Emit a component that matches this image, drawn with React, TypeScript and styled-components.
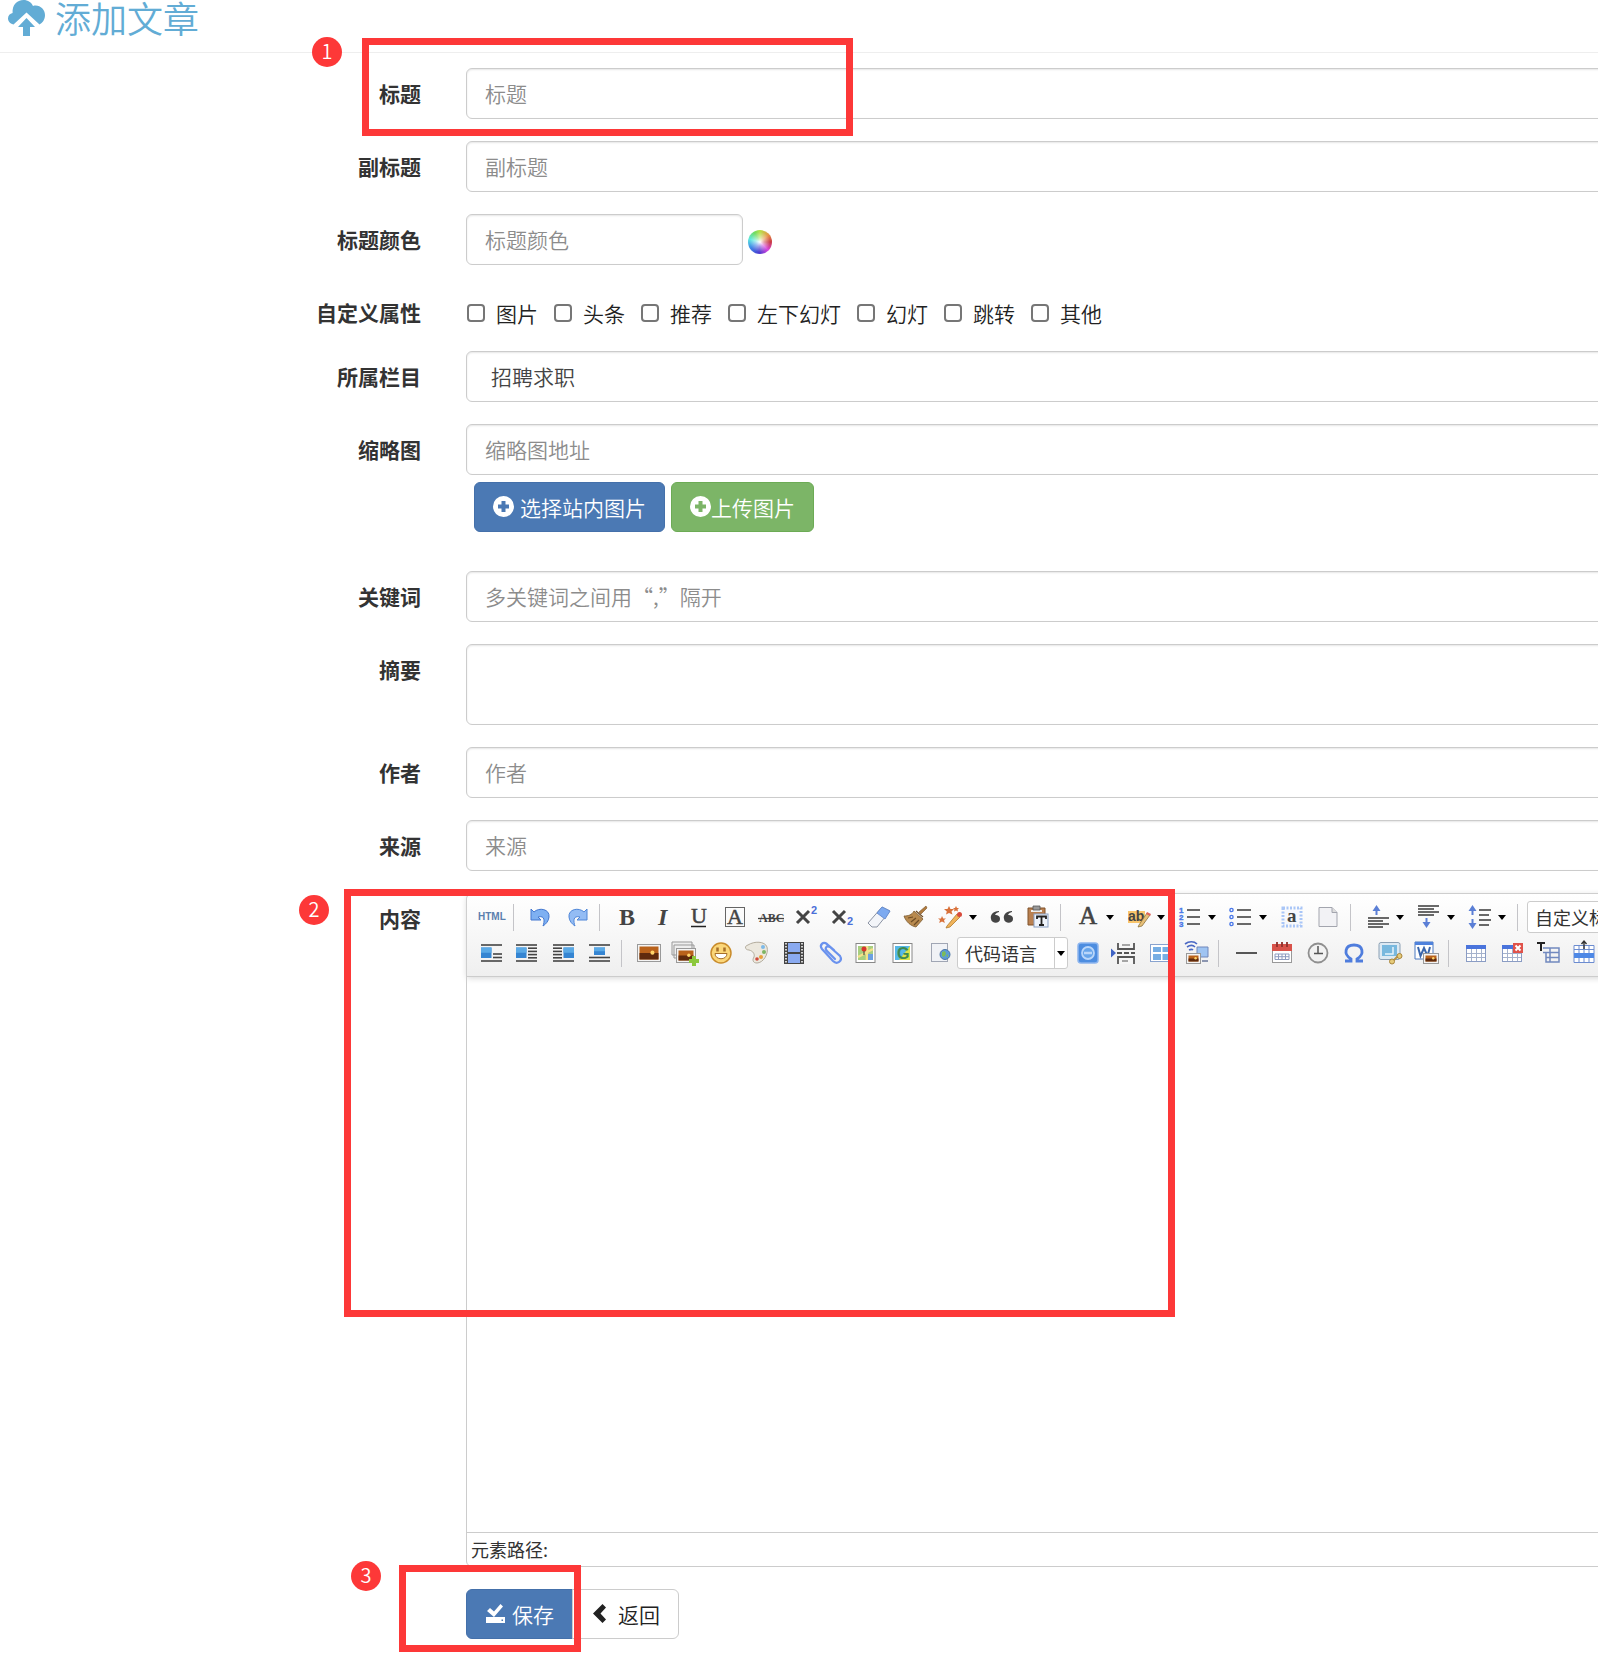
import React from "react";
import styled, { createGlobalStyle } from "styled-components";

const Global = createGlobalStyle`
  *, *::before { box-sizing: border-box; }
  body {
    margin: 0;
    background: #fff;
    color: #333;
    font-family: "Noto Sans CJK SC", "Noto Sans", sans-serif;
    font-size: 21px;
    line-height: 30px;
  }
  button, input, select, textarea { font: inherit; color: inherit; }
`;

const RED = "#fd3838";

const Page = styled.main`
  position: relative;
  overflow-x: clip;
  padding-bottom: 24px;
`;

const Header = styled.header`
  display: flex;
  align-items: flex-start;
  gap: 10px;
  padding: 0 8px 16px;
  border-bottom: 1px solid #eee;
  margin-bottom: 15px;
  color: #62acd5;
`;

const Title = styled.h1`
  margin: 0;
  font-size: 36px;
  line-height: 34px;
  font-weight: 350;
`;

/* The form is wider than the window, so fields run past its right edge. */
const Form = styled.form`
  width: calc(100% + 45px);
  display: flex;
  flex-direction: column;
  gap: 22px;
  font-weight: 350;
`;

const Row = styled.div`
  display: grid;
  grid-template-columns: 421px minmax(0, 1fr);
  column-gap: 45px;
  align-items: start;
`;

const Caption = styled.label`
  padding-top: 10px;
  text-align: right;
  font-weight: 700;
`;

const Input = styled.input<{ $short?: boolean }>`
  display: block;
  width: ${(p) => (p.$short ? "277px" : "100%")};
  height: 51px;
  padding: 0 18px 2px;
  border: 1px solid #ccc;
  border-radius: 6px;
  background: #fff;
  box-shadow: inset 0 1px 2px rgba(0, 0, 0, 0.1);
  outline: none;
  &::placeholder { color: #8c8c8c; opacity: 1; }
`;

const Area = styled.textarea`
  display: block;
  width: 100%;
  height: 81px;
  padding: 9px 18px;
  border: 1px solid #ccc;
  border-radius: 6px;
  box-shadow: inset 0 1px 2px rgba(0, 0, 0, 0.1);
  resize: none;
`;

const Select = styled.select`
  display: block;
  width: 100%;
  height: 51px;
  padding: 0 24px 2px;
  border: 1px solid #ccc;
  border-radius: 6px;
  background: #fff;
  box-shadow: inset 0 1px 2px rgba(0, 0, 0, 0.1);
  color: #444;
  appearance: none;
`;

const Inline = styled.div`
  display: flex;
  align-items: center;
  gap: 5px;
`;

const Wheel = styled.button`
  width: 24px;
  height: 24px;
  margin-top: 4px;
  padding: 0;
  border: 0;
  border-radius: 50%;
  background:
    radial-gradient(circle, #fff 0, rgba(255, 255, 255, 0.5) 25%, rgba(255, 255, 255, 0) 60%),
    conic-gradient(#b5e048, #e8954a 50deg, #c93a45 90deg, #d848dd 135deg, #4a3ad0 185deg, #3f8be8 240deg, #5fe8e0 285deg, #70dc60 330deg, #b5e048);
`;

const Checks = styled.div`
  display: flex;
  gap: 16px;
  padding: 11px 0 1px 1px;
  color: #222;
`;

const Check = styled.label`
  display: flex;
  align-items: center;
  gap: 11px;
`;

const Box = styled.input`
  appearance: none;
  width: 18px;
  height: 18px;
  margin: 0;
  border: 2px solid #767676;
  border-radius: 4px;
  background: #fff;
`;

const Uploads = styled.div`
  display: flex;
  gap: 6px;
  padding: 7px 8px 17px;
`;

const Button = styled.button<{ $kind: "primary" | "success" | "plain"; $tight?: boolean }>`
  display: flex;
  align-items: center;
  gap: ${(p) => (p.$tight ? "0" : "6px")};
  height: 50px;
  padding: 0 18px 1px;
  border-radius: 6px;
  font-weight: 350;
  border: 1px solid ${(p) => ({ primary: "#4470aa", success: "#6cab55", plain: "#ccc" })[p.$kind]};
  background: ${(p) => ({ primary: "#4b79b4", success: "#7cb567", plain: "#fff" })[p.$kind]};
  color: ${(p) => (p.$kind === "plain" ? "#222" : "#fff")};
`;

const Actions = styled.div`
  display: flex;
  ${Button}:first-child { border-radius: 6px 0 0 6px; }
  ${Button}:last-child { border-radius: 0 6px 6px 0; margin-left: -1px; }
`;

const Editor = styled.div`
  border: 1px solid #ccc;
  border-radius: 6px;
  font-size: 18px;
`;

const Toolbar = styled.div`
  position: relative;
  padding: 5px 6px;
  border-bottom: 1px solid #ccc;
  border-radius: 6px 6px 0 0;
  background: linear-gradient(#fff, #efefef);
  box-shadow: 0 1px 6px #d4d4d4;
`;

const Tools = styled.div`
  display: flex;
  align-items: center;
  height: 36px;
`;

const Tool = styled.button`
  flex: none;
  display: grid;
  place-items: center;
  width: 36px;
  height: 30px;
  padding: 0;
  border: 0;
  background: none;
`;

const Caret = styled.button`
  flex: none;
  width: 15px;
  height: 30px;
  padding: 0;
  border: 0;
  background: none;
  &::before {
    content: "";
    display: block;
    width: 8px;
    border: 4px solid transparent;
    border-top: 5px solid #000;
    border-bottom: 0;
  }
`;

const Divider = styled.span`
  flex: none;
  width: 1px;
  height: 27px;
  margin: 0 9px 0 4px;
  background: #c4c4c8;
`;

const Combo = styled.span<{ $wide?: boolean }>`
  flex: none;
  display: flex;
  width: ${(p) => (p.$wide ? "140px" : "111px")};
  height: 32px;
  margin: ${(p) => (p.$wide ? "0" : "0 2px")};
  border: 1px solid #ccc;
  border-radius: 3px;
  background: #fff;
`;

const ComboSelect = styled.select`
  flex: 1;
  min-width: 0;
  padding: 0 0 0 7px;
  border: 0;
  border-right: 1px solid #ccc;
  background: none;
  font-weight: 400;
  appearance: none;
`;

const ComboArrow = styled.span`
  align-self: center;
  width: 8px;
  margin: 0 2px;
  border: 4px solid transparent;
  border-top: 5px solid #000;
  border-bottom: 0;
`;

const Canvas = styled.div`
  height: 555px;
  outline: none;
`;

const Status = styled.div`
  height: 34px;
  padding: 1px 4px;
  border-top: 1px solid #ccc;
  font-weight: 400;
`;

/* Call-outs lie over the form. */
const Frame = styled.div<{ $x: number; $y: number; $w: number; $h: number }>`
  position: absolute;
  left: ${(p) => p.$x}px;
  top: ${(p) => p.$y}px;
  width: ${(p) => p.$w}px;
  height: ${(p) => p.$h}px;
  border: 7px solid ${RED};
  pointer-events: none;
`;

const Badge = styled.span<{ $x: number; $y: number }>`
  position: absolute;
  left: ${(p) => p.$x}px;
  top: ${(p) => p.$y}px;
  width: 30px;
  height: 30px;
  border-radius: 50%;
  background: ${RED};
  color: #fff;
  font-size: 20px;
  line-height: 27px;
  font-weight: 350;
  text-align: center;
`;

const CloudUp = () => (
  <svg width="37" height="36" viewBox="0 0 37 36" fill="currentColor" aria-hidden="true">
    <path d="M5.5 24.5C1.5 23.5 0 20.5 0 18.5c0-3 2-5 4.6-5.5C4 5 9 0 15.5 0 20 0 23.5 2.5 25 6c6-2 12 3 12 9 0 4.5-2.5 8-5.5 9.5L18.5 12.5z" />
    <path d="M18.5 18l8.500 9h-5v9h-7v-9h-5z" />
  </svg>
);

const Plus = () => (
  <svg width="21" height="21" viewBox="0 0 21 21" aria-hidden="true">
    <path fill="currentColor" fillRule="evenodd" d="M10.5 0a10.5 10.5 0 1 0 0 21 10.5 10.5 0 0 0 0-21zM8.500 5h4v3.500H16v4h-3.500V16h-4v-3.500H5v-4h3.500z" />
  </svg>
);

const Saved = () => (
  <svg width="21" height="21" viewBox="0 0 21 21" fill="currentColor" aria-hidden="true">
    <path d="M2 8l3-3 4 3.500L15.500 1 18 3.500 9 14zM1 14h19v6H1z" />
    <path fill="#4b79b4" d="M16.500 16.500h1.500V18h-1.500z" />
  </svg>
);

const Back = () => (
  <svg width="21" height="21" viewBox="0 0 21 21" fill="currentColor" aria-hidden="true">
    <path d="M11.500 1L15 4.500 9.500 10.500 15 16.500 11.500 20 2 10.500z" />
  </svg>
);

const G = "#444";
const serif = "Liberation Serif, serif";
const sans = "Liberation Sans, sans-serif";

const lines = (pts: [number, number, number][], w = 1.6) =>
  pts.map(([x1, x2, y], i) => <path key={i} d={`M${x1} ${y}H${x2}`} stroke={G} strokeWidth={w} />);

const blue = (x: number, y: number, w: number, h: number) => (
  <>
    <rect x={x} y={y} width={w} height={h} fill="#3585d2" />
    <rect x={x} y={y} width={w} height={h / 2} fill="#5aa9e6" />
  </>
);

const photo = (x: number, y: number, w: number, h: number) => (
  <>
    <rect x={x} y={y} width={w} height={h} fill="#f4f4f4" stroke="#999" />
    <rect x={x + 2} y={y + 2} width={w - 4} height={h - 4} fill="#b9621b" />
    <path d={`M${x + 2} ${y + h / 2}h${w - 4}v${h / 2 - 2}h${4 - w}z`} fill="#5f2a0d" />
    <circle cx={x + w * 0.65} cy={y + h * 0.48} r={h * 0.12} fill="#ffd46a" />
  </>
);

const grid = (
  <>
    <rect x="2.500" y="4.500" width="19" height="16" fill="#fff" stroke="#8a9cc4" />
    <path d="M2 4h20v4H2z" fill="#4a74dc" />
    <path d="M7.500 8v12M12.500 8v12M17.500 8v12M3 12.500h18M3 16.500h18" stroke="#a5b2cc" />
  </>
);

const icons: Record<string, React.ReactNode> = {
  html: <text x="-1" y="15" fontFamily={sans} fontSize="10" fontWeight="700" fill="#5b7fae">HTML</text>,
  undo: <path d="M2 4l3 3c5-5 16-3 15 5-.3 4-3 7-6 9 1.500-4 2.500-11-5-9l3 3H2z" fill="#7eb0f2" stroke="#4377cf" />,
  redo: <path d="M22 4l-3 3C14 2 3 4 4 12c.3 4 3 7 6 9-1.500-4-2.500-11 5-9l-3 3h10z" fill="#93bcf4" stroke="#4f86d8" />,
  bold: <text x="4" y="20" fontFamily={serif} fontSize="24" fontWeight="700" fill={G}>B</text>,
  italic: <text x="7" y="20" fontFamily={serif} fontSize="24" fontWeight="700" fontStyle="italic" fill={G}>I</text>,
  underline: (
    <>
      <text x="4" y="18" fontFamily={serif} fontSize="22" fill={G} stroke={G} strokeWidth=".5">U</text>
      <path d="M4 21.500h15" stroke="#222" strokeWidth="1.500" />
    </>
  ),
  box: (
    <>
      <rect x="2.500" y="2.500" width="19" height="19" fill="none" stroke="#666" />
      <text x="4" y="19" fontFamily={serif} fontSize="22" fill={G} stroke={G} strokeWidth=".5">A</text>
    </>
  ),
  strike: (
    <>
      <text x="0" y="17" fontFamily={serif} fontSize="12" fontWeight="700" fill={G}>ABC</text>
      <path d="M-1 13.500h26" stroke={G} strokeWidth="1.300" />
    </>
  ),
  sup: (
    <>
      <path d="M2 6l12 12M14 6L2 18" stroke={G} strokeWidth="3" />
      <text x="16" y="9" fontSize="11" fontWeight="700" fontFamily={sans} fill="#4a6fd8">2</text>
    </>
  ),
  sub: (
    <>
      <path d="M2 6l12 12M14 6L2 18" stroke={G} strokeWidth="3" />
      <text x="16" y="20" fontSize="11" fontWeight="700" fontFamily={sans} fill="#4a6fd8">2</text>
    </>
  ),
  eraser: (
    <>
      <path d="M1 18L15 2l8 4L10 22H5z" fill="#f3f5f9" stroke="#8b93a3" />
      <path d="M10 8l5-6 8 4-5 8z" fill="#7daaf0" stroke="#6a8fd0" />
    </>
  ),
  brush: (
    <>
      <path d="M23 1l-7 6 2 2 6-6z" fill="#b07a3c" stroke="#7b5326" strokeWidth=".6" />
      <path d="M11 6l9 8-7 8C8 21 3 17 1 11c4 0 8-1 10-5z" fill="#b88a4f" stroke="#7b5a30" strokeWidth=".8" />
      <path d="M5 13l5-1M8 17l5-4M11 20l5-5M13 6l7 6" stroke="#6d4c25" strokeWidth="1.200" />
    </>
  ),
  magic: (
    <>
      <path d="M8 21l10-12 3 3-10 10-4 1z" fill="#f0b35a" stroke="#b07a2c" strokeWidth=".8" />
      <circle cx="20.500" cy="9.500" r="2.500" fill="#d84b3c" />
      <path d="M10 1l1.500 3H15l-2.500 2.500 1 3L10 8 7 9.500l.8-3L5 4h3.500zM3 11l1.200 2.500H7L5 15l.8 3L3 16.500.2 18 1 15l-2-1.500h3zM17 1l1 2h2l-1.500 1.500.5 2-2-1-2 1 .5-2L14 3h2z" fill="#d9713a" />
    </>
  ),
  quote: <path d="M9 6C3 6 0 10 1 14c.6 5 9 5 9 0 0-3-2-4-5-4 1-2 2-2.500 4-3zM22 6c-6 0-9 4-8 8 .6 5 9 5 9 0 0-3-2-4-5-4 1-2 2-2.500 4-3z" fill={G} />,
  paste: (
    <>
      <path d="M2 3h17v17H2z" fill="#b98051" stroke="#80532b" />
      <path d="M5 5h11v2H5z" fill="#eee" />
      <path d="M7 1h7v4H7z" fill="#999" stroke="#555" strokeWidth=".8" />
      <rect x="8" y="9" width="14" height="13" fill="#eef3fb" stroke="#8aa0c4" />
      <path d="M11 14v-2.500h9V14M15.500 12v8M13 20h5" stroke="#222" strokeWidth="1.800" fill="none" />
    </>
  ),
  color: <text x="3" y="19" fontFamily={serif} fontSize="25" fill={G} stroke={G} strokeWidth=".6">A</text>,
  mark: (
    <>
      <path d="M1 6h17v12H1z" fill="#f8c56c" />
      <text x="1" y="16" fontFamily={sans} fontSize="14" fontWeight="700" fill={G}>ab</text>
      <path d="M12 20l8-12 3 2-8 11-4 1z" fill="#e8c078" stroke="#8c7440" strokeWidth=".8" />
      <path d="M20 7l4 2-1 2-4-2z" fill="#e0655c" />
    </>
  ),
  ol: (
    <>
      {lines([[9, 22, 5], [9, 22, 12], [9, 22, 19]])}
      {["1", "2", "3"].map((n, i) => (
        <text key={n} x="1" y={8 + i * 7} fontSize="8" fontWeight="700" fontFamily={sans} fill="#4a78e8" stroke="#4a78e8" strokeWidth=".4">{n}</text>
      ))}
    </>
  ),
  ul: (
    <>
      {lines([[8, 22, 5], [8, 22, 12], [8, 22, 19]])}
      {[5, 12, 19].map((y) => <circle key={y} cx="2.500" cy={y} r="1.600" fill="none" stroke="#4a78e8" strokeWidth="1.400" />)}
    </>
  ),
  anchor: (
    <>
      <rect x="3" y="3" width="18" height="18" fill="none" stroke="#a9c6f7" strokeWidth="3" strokeDasharray="2 1.500" />
      <rect x="5" y="5" width="14" height="14" fill="#f6f8fc" />
      <text x="7" y="17" fontFamily={serif} fontSize="19" fontWeight="700" fill={G}>a</text>
    </>
  ),
  page: (
    <>
      <path d="M3 2.500h13l5 5v14H3z" fill="#f2f2f5" stroke="#a3a5ae" />
      <path d="M16 2.500v5h5" fill="#ddd" stroke="#a3a5ae" />
    </>
  ),
  above: (
    <>
      {lines([[2, 23, 13], [2, 17, 16], [2, 23, 19], [2, 17, 22]])}
      <path d="M10.500 0l4 6h-3v4h-2V6h-3z" fill="#5b7fd6" />
    </>
  ),
  below: (
    <>
      {lines([[1, 22, 1], [1, 17, 4], [1, 22, 7], [1, 17, 10]])}
      <path d="M9.500 23l4-6h-3v-4h-2v4h-3z" fill="#5b7fd6" />
    </>
  ),
  leading: (
    <>
      {lines([[11, 23, 5], [11, 21, 10], [11, 23, 15], [11, 21, 20]])}
      <path d="M4.500 0l4 6h-3v4h-2V6h-3zM4.500 24l4-6h-3v-4h-2v4h-3z" fill="#5b7fd6" />
    </>
  ),
  left: (
    <>
      {lines([[2, 23, 4], [14, 23, 13], [14, 23, 16.5], [2, 23, 20]])}
      {blue(2, 6.5, 10.5, 10.5)}
    </>
  ),
  wrapLeft: (
    <>
      {lines([[1, 22, 4], [13, 22, 7.2], [13, 22, 10.4], [13, 22, 13.6], [13, 22, 16.8], [1, 22, 20]])}
      {blue(1, 6.5, 10.5, 10.5)}
    </>
  ),
  wrapRight: (
    <>
      {lines([[2, 23, 4], [2, 11, 7.2], [2, 11, 10.4], [2, 11, 13.6], [2, 11, 16.8], [2, 23, 20]])}
      {blue(12.5, 6.5, 10.5, 10.5)}
    </>
  ),
  middle: (
    <>
      {lines([[2, 23, 4], [2, 23, 16.5], [2, 23, 20]])}
      {blue(7, 6.5, 11, 7.5)}
    </>
  ),
  image: photo(0.5, 3.5, 23, 17),
  images: (
    <>
      <path d="M-1 1h20v13H-1zM1 4h20v13H1z" fill="#eee" stroke="#999" />
      {photo(3.5, 7.5, 19, 14)}
      <path d="M19 15h4v3h3v4h-3v3h-4v-3h-3v-4h3z" fill="#8cc83c" />
    </>
  ),
  smile: (
    <>
      <circle cx="12" cy="12" r="10" fill="#fbd679" stroke="#c98c2c" strokeWidth="1.500" />
      <path d="M6 12.500h12c0 7-12 7-12 0z" fill="#fff" stroke="#a8702a" />
      <path d="M8.500 6.500v4M15.500 6.500v4" stroke="#a8702a" strokeWidth="2.500" />
    </>
  ),
  palette: (
    <>
      <path d="M4 9C0 9-1 5 3 4c6-4 17-4 19 2 2 7-4 16-10 16-4 0-5-3-3-6 1-3-1-6-5-7z" fill="#ece8de" stroke="#b3ac9d" />
      <circle cx="18" cy="6" r="2" fill="#7db9e8" />
      <circle cx="19" cy="11" r="2" fill="#7fb562" />
      <circle cx="16" cy="16" r="2" fill="#e8a13c" />
      <circle cx="12" cy="18" r="1.800" fill="#cf4a3c" />
    </>
  ),
  film: (
    <>
      <path d="M3 1h20v22H3z" fill="#444" />
      <path d="M7 2h12v9H7zM7 13h12v9H7z" fill="#8aaaf0" />
      <path d="M5 2v21M21 2v21" stroke="#e5e5e5" strokeWidth="1.800" strokeDasharray="1.500 1.500" />
    </>
  ),
  clip: <path d="M17 9L10 3C6 0 2 4 5 8l11 12c4 4 10 0 7-5L13 6C10 4 7 7 10 10l8 8" fill="none" stroke="#6a92ee" strokeWidth="2.200" strokeLinecap="round" />,
  map: (
    <>
      <rect x="3" y="2.500" width="19" height="19" fill="#fff" stroke="#888" />
      <path d="M5 5h15v14H5z" fill="#a8cf80" />
      <path d="M5 16l15-8M14 5v14" stroke="#f5e08a" strokeWidth="2.500" />
      <path d="M15 13h5v6h-5z" fill="#6ca0e0" />
      <path d="M11 14V9" stroke="#333" />
      <circle cx="11" cy="8" r="2.500" fill="#d8342c" />
    </>
  ),
  gmap: (
    <>
      <rect x="4" y="2.500" width="19" height="19" fill="#fff" stroke="#888" />
      <path d="M6 5h15v14H6z" fill="#56b8e8" />
      <path d="M21 5v14H10z" fill="#dbe24a" />
      <text x="8" y="18" fontFamily={sans} fontSize="16" fontWeight="700" fill="#3f8a50">G</text>
    </>
  ),
  frame: (
    <>
      <rect x="6.500" y="2.500" width="16" height="18" fill="#f0f2f6" stroke="#a0a6b4" />
      <circle cx="20" cy="13.500" r="5" fill="#5b9bd8" stroke="#4a75a5" />
      <path d="M17 11l3-1 1 3-2 3-2-1zM21 15l2-2v3z" fill="#7cbb5a" />
    </>
  ),
  app: (
    <>
      <rect x="2" y="2" width="20" height="20" rx="3" fill="#4d8de0" stroke="#8db5ee" strokeWidth="1.500" />
      <circle cx="12" cy="12" r="6" fill="#68a5ea" stroke="#b9d6fa" strokeWidth="1.800" />
      <path d="M8 12h8" stroke="#b9d6fa" strokeWidth="2.500" />
    </>
  ),
  pageBreak: (
    <>
      <path d="M-1 7.500l5 4.500-5 4.500z" fill="#3f63c4" />
      <path d="M6 2v6h16V2M6 23v-7h16v7" fill="#f6f6f6" stroke="#555" strokeWidth="1.800" />
      <path d="M5 12h18" stroke="#555" strokeWidth="1.800" strokeDasharray="5 2" />
      <path d="M10 4h8M10 20h6" stroke="#555" />
    </>
  ),
  template: (
    <>
      <rect x="2.500" y="3.500" width="22" height="17" fill="#fff" stroke="#88a3cf" />
      <path d="M5 6h8v5H5zM14.500 6h8v5h-8zM5 13h8v6H5zM14.500 13h8v6h-8z" fill="#76aee4" />
    </>
  ),
  background: (
    <>
      <path d="M1 3c4-3 9-3 12 0M3 6c3-2 6-2 8 0M5 9c2-1 3-1 4 0" fill="none" stroke="#4a68c4" strokeWidth="1.600" />
      <path d="M13 6h11v10H13z" fill="#9fc4f2" stroke="#7187bb" />
      {photo(2.5, 12.5, 14, 10)}
      <path d="M18 19h6v2h-6z" fill="#8b95b0" />
    </>
  ),
  hr: lines([[2, 23, 12]], 1.8),
  date: (
    <>
      <rect x="2.500" y="3.500" width="19" height="18" fill="#fff" stroke="#999" />
      <path d="M2 3h20v7H2z" fill="#d8524a" />
      <path d="M7 1v5M12 1v5M17 1v5" stroke="#8f2f2a" strokeWidth="1.800" />
      <path d="M5 13h14v5.500H5zM8.500 13v5.500M12 13v5.500M15.500 13v5.500M5 15.700h14" fill="none" stroke="#8e9cc0" />
    </>
  ),
  time: (
    <>
      <circle cx="12" cy="12" r="9.500" fill="#f2f2f2" stroke="#8f8f8f" strokeWidth="1.800" />
      <path d="M12 5v8M8 12.500h9" stroke="#555" strokeWidth="1.500" />
    </>
  ),
  omega: <path d="M3 20h6v-2C1 13 3 4 12 4s11 9 3 14v2h6" fill="none" stroke="#4f7ddd" strokeWidth="2.800" />,
  snapshot: (
    <>
      <rect x="1" y="1.500" width="21" height="17" rx="2" fill="#dce9f3" stroke="#8ba0b4" />
      <path d="M4 4h15v11H4z" fill="#78b8de" />
      <path d="M15 6v7H7" fill="none" stroke="#e6f4fc" strokeWidth="1.500" />
      <path d="M14 21l6-6" stroke="#b89346" strokeWidth="2" />
      <circle cx="14" cy="20.500" r="2.500" fill="#e6cb7a" stroke="#a8853c" />
      <circle cx="21.500" cy="15" r="2.500" fill="#e6cb7a" stroke="#a8853c" />
    </>
  ),
  word: (
    <>
      <path d="M1 1h18v17H1z" fill="#fff" stroke="#4a78c0" />
      <path d="M1 1h18v3H1z" fill="#4f82dc" />
      <path d="M4 6l2.500 9L10 7l3.500 8L16 6" fill="none" stroke="#3a66ac" strokeWidth="2" />
      {photo(9.5, 12.5, 15, 10)}
    </>
  ),
  table: grid,
  tableDelete: (
    <>
      {grid}
      <path d="M13 2h10v10H13z" fill="#e0524a" />
      <path d="M15.500 4.500l5 5M20.500 4.500l-5 5" stroke="#fff" strokeWidth="2" />
    </>
  ),
  tableTitle: (
    <>
      <path d="M1 2h8M5 2v8" stroke="#222" strokeWidth="2" />
      <path d="M7 7h16v14H10v-9M7 11.500h16M10 16.500h13M14 7v14" fill="none" stroke="#7189bf" strokeWidth="1.500" />
    </>
  ),
  rowInsert: (
    <>
      <path d="M2 4.500h20v17H2zM2 8.500h20M7 4v17M12 4v17M17 4v17" fill="#fff" stroke="#6c8cd0" />
      <path d="M2 12h20v5H2z" fill="#4e88e6" />
      <path d="M12 8V0M9.500 3L12 0l2.500 3" fill="none" stroke="#333" strokeWidth="1.400" />
    </>
  ),
};

type Item = { icon: string; label: string; caret?: boolean } | { combo: string; wide?: boolean } | "|";
const t = (icon: string, label: string, caret = false): Item => ({ icon, label, caret });

const rowOne: Item[] = [
  t("html", "源代码"), "|", t("undo", "撤销"), t("redo", "重做"), "|",
  t("bold", "加粗"), t("italic", "斜体"), t("underline", "下划线"), t("box", "字符边框"), t("strike", "删除线"),
  t("sup", "上标"), t("sub", "下标"), t("eraser", "清除格式"), t("brush", "格式刷"), t("magic", "自动排版", true),
  t("quote", "引用"), t("paste", "纯文本粘贴"), "|", t("color", "字体颜色", true), t("mark", "背景色", true),
  t("ol", "有序列表", true), t("ul", "无序列表", true), t("anchor", "全选"), t("page", "清空文档"), "|",
  t("above", "段前距", true), t("below", "段后距", true), t("leading", "行间距", true), "|",
  { combo: "自定义标题", wide: true },
];

const rowTwo: Item[] = [
  t("left", "左浮动"), t("wrapLeft", "左环绕"), t("wrapRight", "右环绕"), t("middle", "居中"), "|",
  t("image", "单图上传"), t("images", "多图上传"), t("smile", "表情"), t("palette", "涂鸦"), t("film", "视频"),
  t("clip", "附件"), t("map", "百度地图"), t("gmap", "谷歌地图"), t("frame", "插入框架"),
  { combo: "代码语言" }, t("app", "百度应用"), t("pageBreak", "分页"), t("template", "模板"), t("background", "背景"), "|",
  t("hr", "分隔线"), t("date", "日期"), t("time", "时间"), t("omega", "特殊字符"), t("snapshot", "截图"), t("word", "图片转存"), "|",
  t("table", "插入表格"), t("tableDelete", "删除表格"), t("tableTitle", "表格标题"), t("rowInsert", "前插入行"),
];

const ToolRow = ({ items }: { items: Item[] }) => (
  <Tools>
    {items.map((it, i) => {
      if (it === "|") return <Divider key={i} />;
      if ("combo" in it)
        return (
          <Combo key={i} $wide={it.wide}>
            <ComboSelect aria-label={it.combo}><option>{it.combo}</option></ComboSelect>
            <ComboArrow />
          </Combo>
        );
      return (
        <React.Fragment key={i}>
          <Tool type="button" aria-label={it.label}>
            <svg width="24" height="24" viewBox="0 0 24 24" fill="none" overflow="visible">{icons[it.icon]}</svg>
          </Tool>
          {it.caret && <Caret type="button" aria-label={it.label + "选项"} />}
        </React.Fragment>
      );
    })}
  </Tools>
);

const Field = ({ id, label, hint = label, short, children }: {
  id: string; label: string; hint?: string; short?: boolean; children?: React.ReactNode;
}) => (
  <Row>
    <Caption htmlFor={id}>{label}</Caption>
    {short ? (
      <Inline><Input id={id} placeholder={hint} $short />{children}</Inline>
    ) : (
      <div><Input id={id} placeholder={hint} />{children}</div>
    )}
  </Row>
);

export default function App() {
  return (
    <Page>
      <Global />
      <Header><CloudUp /><Title>添加文章</Title></Header>
      <Form onSubmit={(e) => e.preventDefault()}>
        <Field id="title" label="标题" />
        <Field id="subtitle" label="副标题" />
        <Field id="color" label="标题颜色" short><Wheel type="button" aria-label="选择颜色" /></Field>
        <Row>
          <Caption as="span" id="flags">自定义属性</Caption>
          <Checks role="group" aria-labelledby="flags">
            {["图片", "头条", "推荐", "左下幻灯", "幻灯", "跳转", "其他"].map((n) => (
              <Check key={n}><Box type="checkbox" />{n}</Check>
            ))}
          </Checks>
        </Row>
        <Row>
          <Caption htmlFor="category">所属栏目</Caption>
          <Select id="category"><option>招聘求职</option></Select>
        </Row>
        <Field id="thumb" label="缩略图" hint="缩略图地址">
          <Uploads>
            <Button type="button" $kind="primary"><Plus />选择站内图片</Button>
            <Button type="button" $kind="success" $tight><Plus />上传图片</Button>
          </Uploads>
        </Field>
        <Field id="keywords" label="关键词" hint="多关键词之间用“,”隔开" />
        <Row>
          <Caption htmlFor="summary">摘要</Caption>
          <Area id="summary" />
        </Row>
        <Field id="author" label="作者" />
        <Field id="source" label="来源" />
        <Row>
          <Caption as="span" id="content">内容</Caption>
          <Editor>
            <Toolbar>
              <ToolRow items={rowOne} />
              <ToolRow items={rowTwo} />
            </Toolbar>
            <Canvas contentEditable suppressContentEditableWarning role="textbox" aria-labelledby="content" />
            <Status>元素路径:</Status>
          </Editor>
        </Row>
        <Row>
          <span />
          <Actions>
            <Button type="submit" $kind="primary"><Saved />保存</Button>
            <Button type="button" $kind="plain"><Back />返回</Button>
          </Actions>
        </Row>
      </Form>
      <Frame $x={362} $y={38} $w={491} $h={98} />
      <Frame $x={344} $y={889} $w={831} $h={428} />
      <Frame $x={399} $y={1565} $w={182} $h={87} />
      <Badge $x={312} $y={37}>1</Badge>
      <Badge $x={299} $y={895}>2</Badge>
      <Badge $x={351} $y={1561}>3</Badge>
    </Page>
  );
}
